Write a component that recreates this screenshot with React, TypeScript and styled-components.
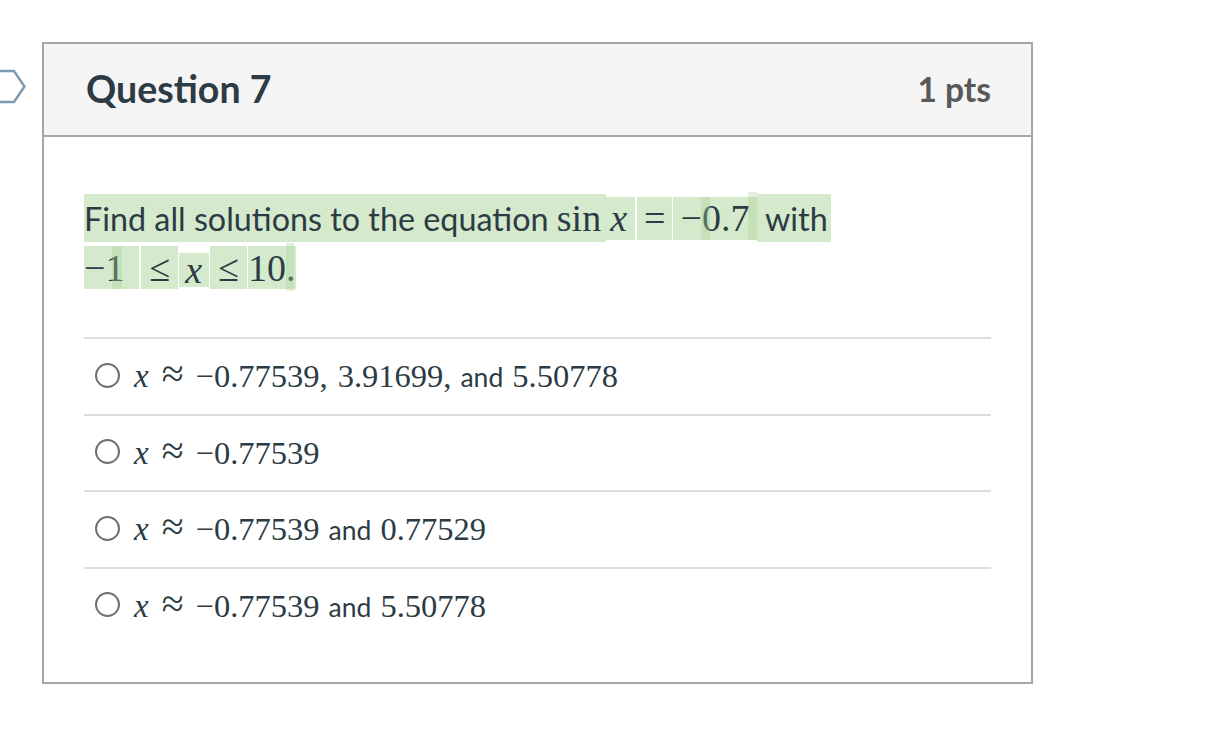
import React from "react";
import styled, { createGlobalStyle } from "styled-components";

const GlobalStyle = createGlobalStyle`
  html, body { margin: 0; padding: 0; background: #ffffff; }
  body { font-family: Lato, "Noto Sans", sans-serif; color: #2d3b45; }
`;

const Page = styled.div`
  position: relative;
  width: 1228px;
  height: 740px;
  padding: 42px 0 0 42px;
  box-sizing: border-box;
`;

const FlagIcon = styled.svg`
  position: absolute;
  left: 0;
  top: 69px;
`;

const Card = styled.section`
  width: 991px;
  height: 642px;
  box-sizing: border-box;
  border: 2px solid #a6a6a6;
  display: flex;
  flex-direction: column;
`;

const Header = styled.header`
  height: 93px;
  flex: none;
  box-sizing: border-box;
  background: #f5f5f5;
  border-bottom: 2px solid #a6a6a6;
  display: flex;
  align-items: center;
  justify-content: space-between;
  padding: 0 40px 2px 42px;
`;

const Title = styled.h2`
  margin: 0;
  font-family: Lato, sans-serif;
  font-weight: 700;
  font-size: 37.5px;
  color: #2d3b45;
`;

const Points = styled.div`
  font-family: Lato, sans-serif;
  font-weight: 700;
  font-size: 33.5px;
  color: #595959;
`;

const Body = styled.div`
  padding: 57px 40px 0 40px;
`;

const Question = styled.div`
  display: flex;
  flex-direction: column;
  gap: 4px;
  margin-bottom: 48px;
  font-size: 32.3px;
  color: #2d3b45;
`;

const QLine = styled.div<{ $tall: number }>`
  display: flex;
  align-items: center;
  height: ${(p) => p.$tall}px;
`;

const Hl = styled.span<{ $h: number; $gap?: number; $pl?: number; $pr?: number; $low?: boolean }>`
  position: relative;
  display: inline-flex;
  align-items: center;
  background: #d5eacc;
  height: ${(p) => p.$h}px;
  margin-right: ${(p) => p.$gap ?? 0}px;
  padding: 0 ${(p) => p.$pr ?? 0}px 0 ${(p) => p.$pl ?? 0}px;
  white-space: pre;
  ${(p) => (p.$low ? "align-self: flex-end; margin-bottom: 2px;" : "")}
`;

const Strip = styled.span<{ $left?: number; $right?: number; $w: number; $top?: number; $bottom?: number }>`
  position: absolute;
  ${(p) => (p.$right !== undefined ? `right: ${p.$right}px;` : `left: ${p.$left ?? 0}px;`)}
  width: ${(p) => p.$w}px;
  top: ${(p) => p.$top ?? 0}px;
  bottom: ${(p) => p.$bottom ?? 0}px;
  background: rgba(170, 210, 150, 0.35);
`;

const QMath = styled.span`
  font-family: "Liberation Serif", "DejaVu Serif", serif;
  font-size: 38px;
`;

const QVar = styled.i`
  font-family: "Liberation Serif", "DejaVu Serif", serif;
  font-size: 38px;
  font-style: italic;
`;

const Options = styled.ul`
  list-style: none;
  margin: 0;
  padding: 0;
`;

const Option = styled.li`
  height: 76.5px;
  box-sizing: border-box;
  border-top: 2px solid #dddddd;
  display: flex;
  align-items: center;
  gap: 14px;
  padding: 0 0 5px 11px;
  font-size: 26.5px;
  color: #2d3b45;
`;

const Radio = styled.span`
  width: 21px;
  height: 21px;
  border-radius: 50%;
  border: 2px solid #707070;
  flex: none;
  margin-top: 3px;
`;

const OptText = styled.span`
  display: flex;
  align-items: baseline;
  white-space: pre;
`;

const OMath = styled.span`
  font-family: "Liberation Serif", "DejaVu Serif", serif;
  font-size: 32.5px;
`;

const OVar = styled.i`
  font-family: "Liberation Serif", "DejaVu Serif", serif;
  font-size: 33px;
  font-style: italic;
`;

const Rel = styled(OMath)`
  font-size: 40px;
  margin: 0 12px 0 13px;
`;

const Joiner = styled.span<{ $w?: number }>`
  margin: 0 ${(p) => p.$w ?? 9}px;
`;

const opts: { nums: string[]; joins: string[] }[] = [
  { nums: ["−0.77539,", "3.91699,", "5.50778"], joins: ["", "and"] },
  { nums: ["−0.77539"], joins: [] },
  { nums: ["−0.77539", "0.77529"], joins: ["and"] },
  { nums: ["−0.77539", "5.50778"], joins: ["and"] },
];

export default function App() {
  return (
    <>
      <GlobalStyle />
      <Page>
        <FlagIcon width="28" height="35" viewBox="0 0 28 35">
          <path
            d="M-2 2 H14 L24.5 17.5 L14 33 H-2"
            fill="none"
            stroke="#7b99b3"
            strokeWidth="2.4"
            strokeLinejoin="miter"
          />
        </FlagIcon>
        <Card>
          <Header>
            <Title>Question 7</Title>
            <Points>1 pts</Points>
          </Header>
          <Body>
            <Question>
              <QLine $tall={48}>
                <Hl $h={48}>Find all solutions to the equation </Hl>
                <Hl $h={48} $pr={5}>
                  <QMath>sin</QMath>
                </Hl>
                <Hl $h={43} $gap={2} $pl={4} $pr={8}>
                  <QVar>x</QVar>
                </Hl>
                <Hl $h={43} $gap={1} $pl={7} $pr={7}>
                  <QMath>=</QMath>
                </Hl>
                <Hl $h={43} $pl={7} $pr={8}>
                  <QMath>−0.7</QMath>
                  <Strip $left={28} $w={9} />
                  <Strip $right={0} $w={9} $top={-5} />
                </Hl>
                <Hl $h={48} $pr={3}>{" with"}</Hl>
              </QLine>
              <QLine $tall={43}>
                <Hl $h={43} $gap={2} $pr={15}>
                  <QMath>−1</QMath>
                  <Strip $left={28} $w={10} />
                </Hl>
                <Hl $h={43} $gap={1} $pl={8} $pr={8}>
                  <QMath>≤</QMath>
                </Hl>
                <Hl $h={34} $gap={1} $pl={6} $pr={7} $low>
                  <QVar>x</QVar>
                </Hl>
                <Hl $h={43} $gap={1} $pl={8} $pr={8}>
                  <QMath>≤</QMath>
                </Hl>
                <Hl $h={43}>
                  <QMath>10</QMath>
                </Hl>
                <Hl $h={43}>
                  <QMath>.</QMath>
                  <Strip $left={0} $w={8} $top={-3} $bottom={-2} />
                </Hl>
              </QLine>
            </Question>
            <Options>
              {opts.map((o, i) => (
                <Option key={i}>
                  <Radio />
                  <OptText>
                    <OVar>x</OVar>
                    <Rel>≈</Rel>
                    <OMath>{o.nums[0]}</OMath>
                    {o.nums.slice(1).map((n, j) => (
                      <React.Fragment key={j}>
                        <Joiner $w={o.joins[j] ? 9 : 5}>{o.joins[j]}</Joiner>
                        <OMath>{n}</OMath>
                      </React.Fragment>
                    ))}
                  </OptText>
                </Option>
              ))}
            </Options>
          </Body>
        </Card>
      </Page>
    </>
  );
}
